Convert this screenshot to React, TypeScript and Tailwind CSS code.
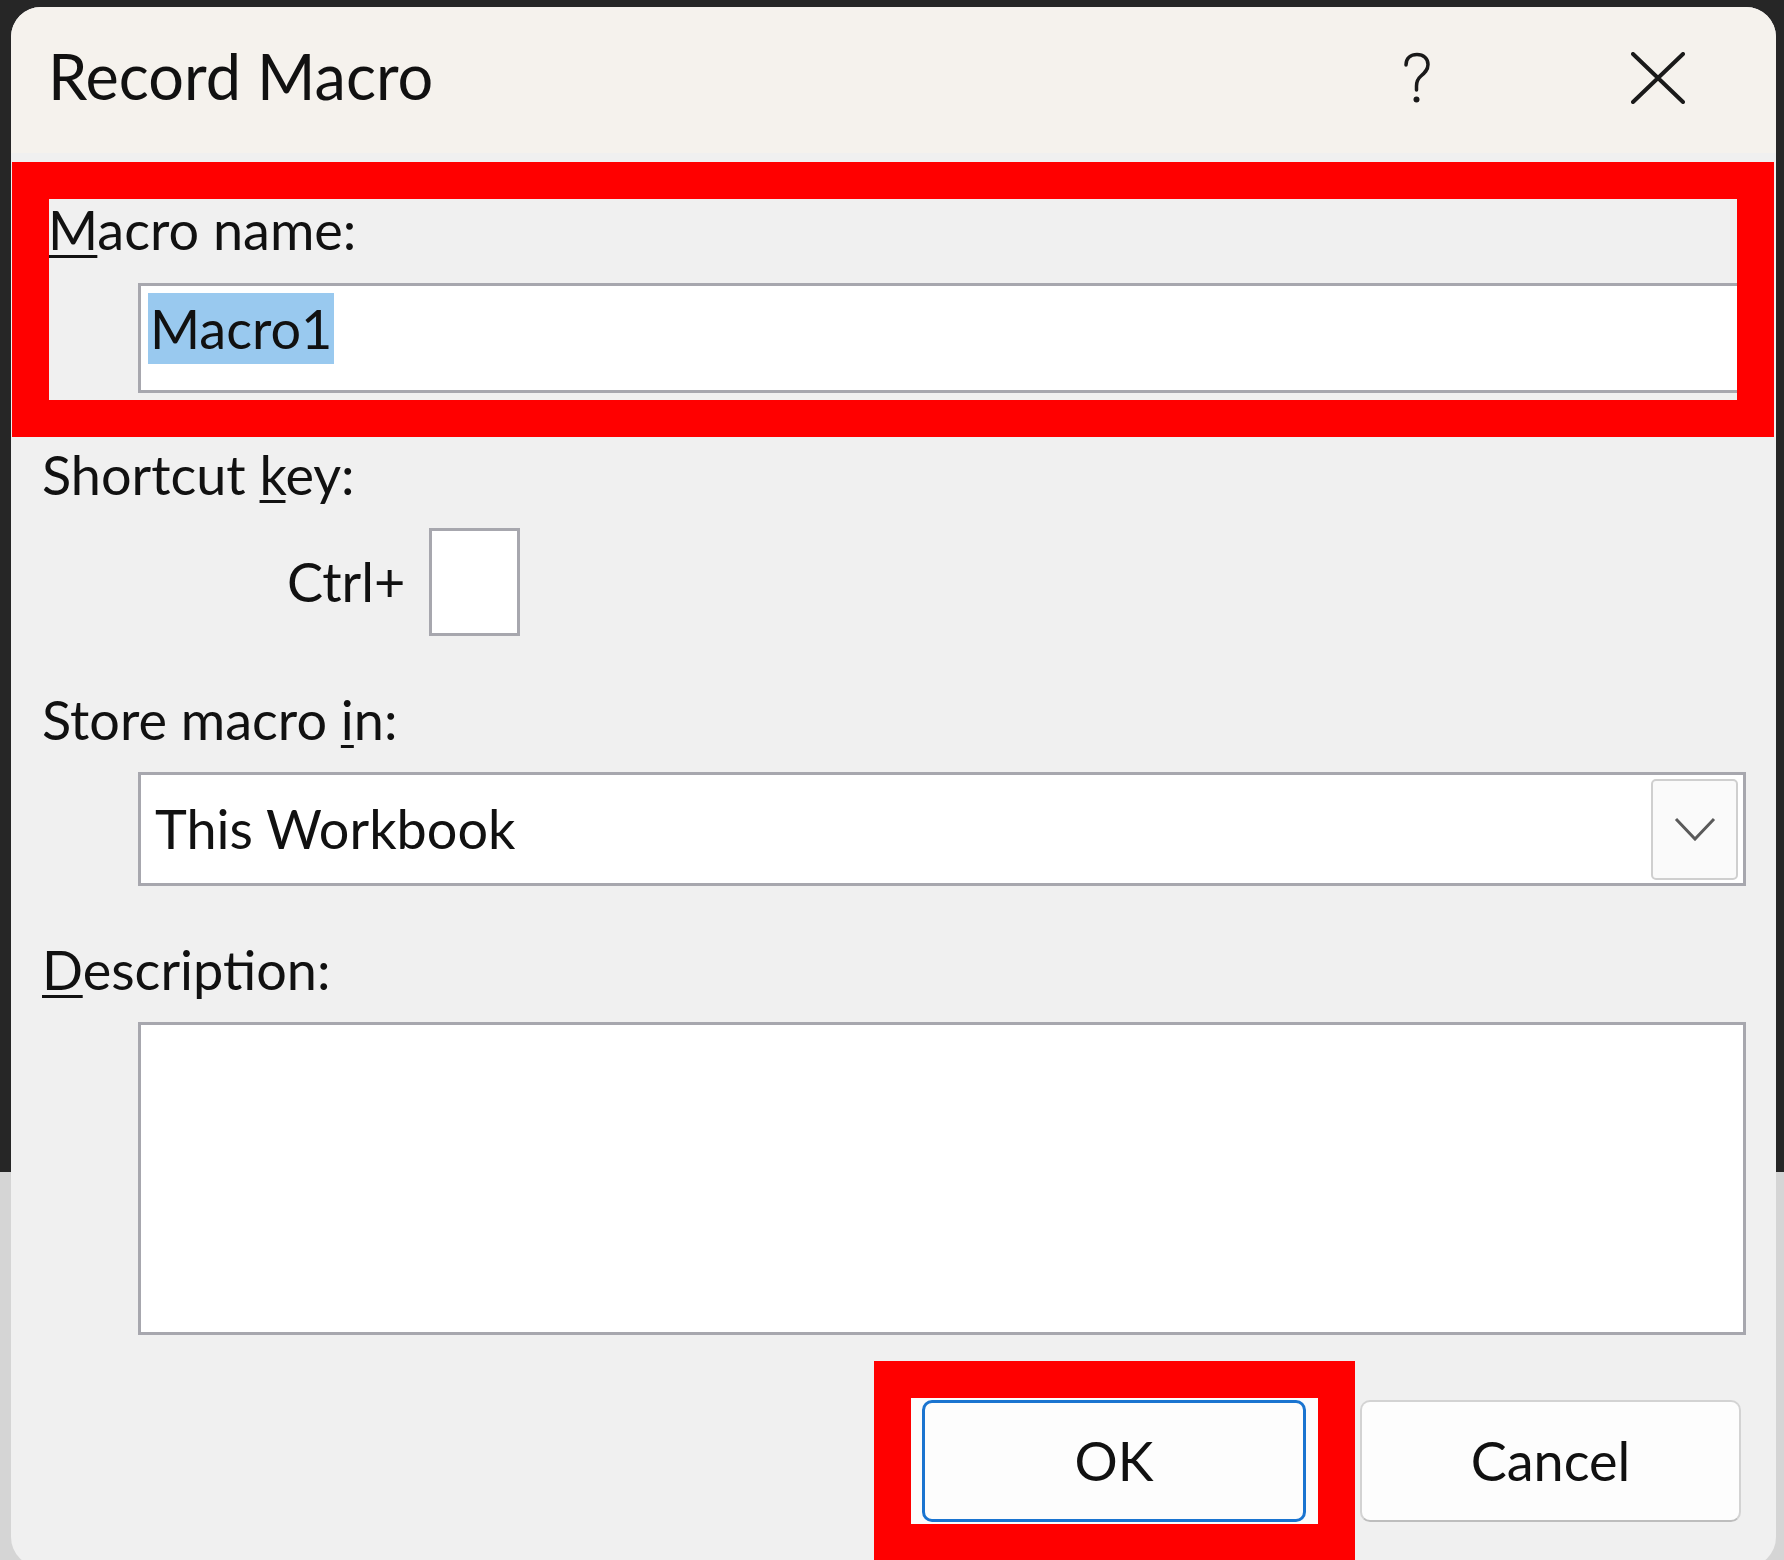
const labelText = "block h-[54px] text-[54px] leading-[54px] whitespace-nowrap";
const fieldBorder = "border-[3px] border-[#a7a7ae] bg-white";

function Key({ children }: { children: string }) {
  return <span className="underline decoration-3 underline-offset-[5px]">{children}</span>;
}

function HelpIcon() {
  return (
    <svg width="28" height="52" viewBox="0 0 28 52" fill="none" className="mt-[8px]">
      <path
        d="M3 13 C3 6 8 2.5 14 2.5 C20.5 2.5 25 6.5 25 12.5 C25 18 21.5 21 18 24 C15 26.5 13.5 29 13.5 34 L13.5 38"
        stroke="#1a1a1a"
        strokeWidth="3.5"
        strokeLinecap="round"
      />
      <circle cx="13.5" cy="47.5" r="3" fill="#1a1a1a" />
    </svg>
  );
}

function CloseIcon() {
  return (
    <svg width="54" height="52" viewBox="0 0 54 52" fill="none" className="ml-[200px] mt-[8px]">
      <path d="M2 2 L52 50 M52 2 L2 50" stroke="#1a1a1a" strokeWidth="4" strokeLinecap="round" />
    </svg>
  );
}

function Chevron() {
  return (
    <svg width="42" height="24" viewBox="0 0 42 24" fill="none">
      <path d="M2 2 L21 22 L40 2" stroke="#5a5a5a" strokeWidth="3" strokeLinejoin="miter" />
    </svg>
  );
}

export default function App() {
  return (
    <div className="flex h-[1560px] w-[1784px] overflow-hidden bg-[linear-gradient(#262626_1172px,#d5d5d5_1172px)] font-['Lato','Noto_Sans',sans-serif] text-[#111]">
      <div className="w-[11px] shrink-0" />
      <div className="shrink-0 pt-[7px]">
        <div className="relative flex h-[1560px] w-[1765px] flex-col overflow-hidden rounded-[30px] bg-[#f0f0f0]">
          {/* title bar */}
          <header className="flex h-[146px] shrink-0 items-start bg-[#f5f2ed] pl-[37px] pr-[91px] pt-[37px]">
            <h1 className="text-[63px] font-normal leading-[63px]">Record Macro</h1>
            <div className="ml-auto flex items-start">
              <HelpIcon />
              <CloseIcon />
            </div>
          </header>

          <div className="flex flex-col pl-[31px] pr-[30px] pt-[50px]">
            <label className={`${labelText} ml-[6px]`}>
              <Key>M</Key>acro name:
            </label>
            <div className={`ml-[96px] mt-[26px] h-[110px] pl-[7px] pt-[7px] ${fieldBorder}`}>
              <span className="inline-block bg-[#99c9ef] px-[2px] text-[54px] leading-[71px]">Macro1</span>
            </div>

            <label className={`${labelText} mt-[55px]`}>
              Shortcut <Key>k</Key>ey:
            </label>
            <div className="mt-[26px] flex h-[108px] items-center pl-[245px]">
              <span className="text-[54px] leading-none">Ctrl+</span>
              <div className={`ml-[24px] h-[108px] w-[91px] ${fieldBorder}`} />
            </div>

            <label className={`${labelText} mt-[57px]`}>
              Store macro <Key>i</Key>n:
            </label>
            <div className={`ml-[96px] mt-[25px] flex h-[114px] items-center pl-[14px] pr-[5px] ${fieldBorder}`}>
              <span className="text-[54px] leading-none">This Workbook</span>
              <div className="ml-auto flex h-[101px] w-[87px] items-center justify-center rounded-[5px] border-2 border-[#cfcfcf] bg-[#fafafa]">
                <Chevron />
              </div>
            </div>

            <label className={`${labelText} mt-[57px]`}>
              <Key>D</Key>escription:
            </label>
            <div className={`ml-[96px] mt-[25px] h-[313px] ${fieldBorder}`} />

            <div className="mr-[5px] mt-[65px] flex justify-end gap-[54px]">
              <div className="relative">
                <div className="absolute left-[-48px] top-[-39px] h-[200px] w-[481px] border-[37px] border-[#ff0000] bg-[#fcfcfc]" />
                <button className="relative flex h-[122px] w-[384px] items-center justify-center rounded-[10px] border-[3px] border-[#1a74d0] bg-[#fdfdfd] text-[54px] leading-none">
                  OK
                </button>
              </div>
              <button className="flex h-[122px] w-[381px] items-center justify-center rounded-[10px] border-2 border-[#d3d3d3] border-b-[#bdbdbd] bg-[#fdfdfd] text-[54px] leading-none">
                Cancel
              </button>
            </div>
          </div>

          {/* annotation around the macro name */}
          <div className="pointer-events-none absolute left-[1px] top-[155px] h-[275px] w-[1762px] border-[37px] border-[#ff0000]" />
        </div>
      </div>
      <div className="w-[8px] shrink-0" />
    </div>
  );
}
